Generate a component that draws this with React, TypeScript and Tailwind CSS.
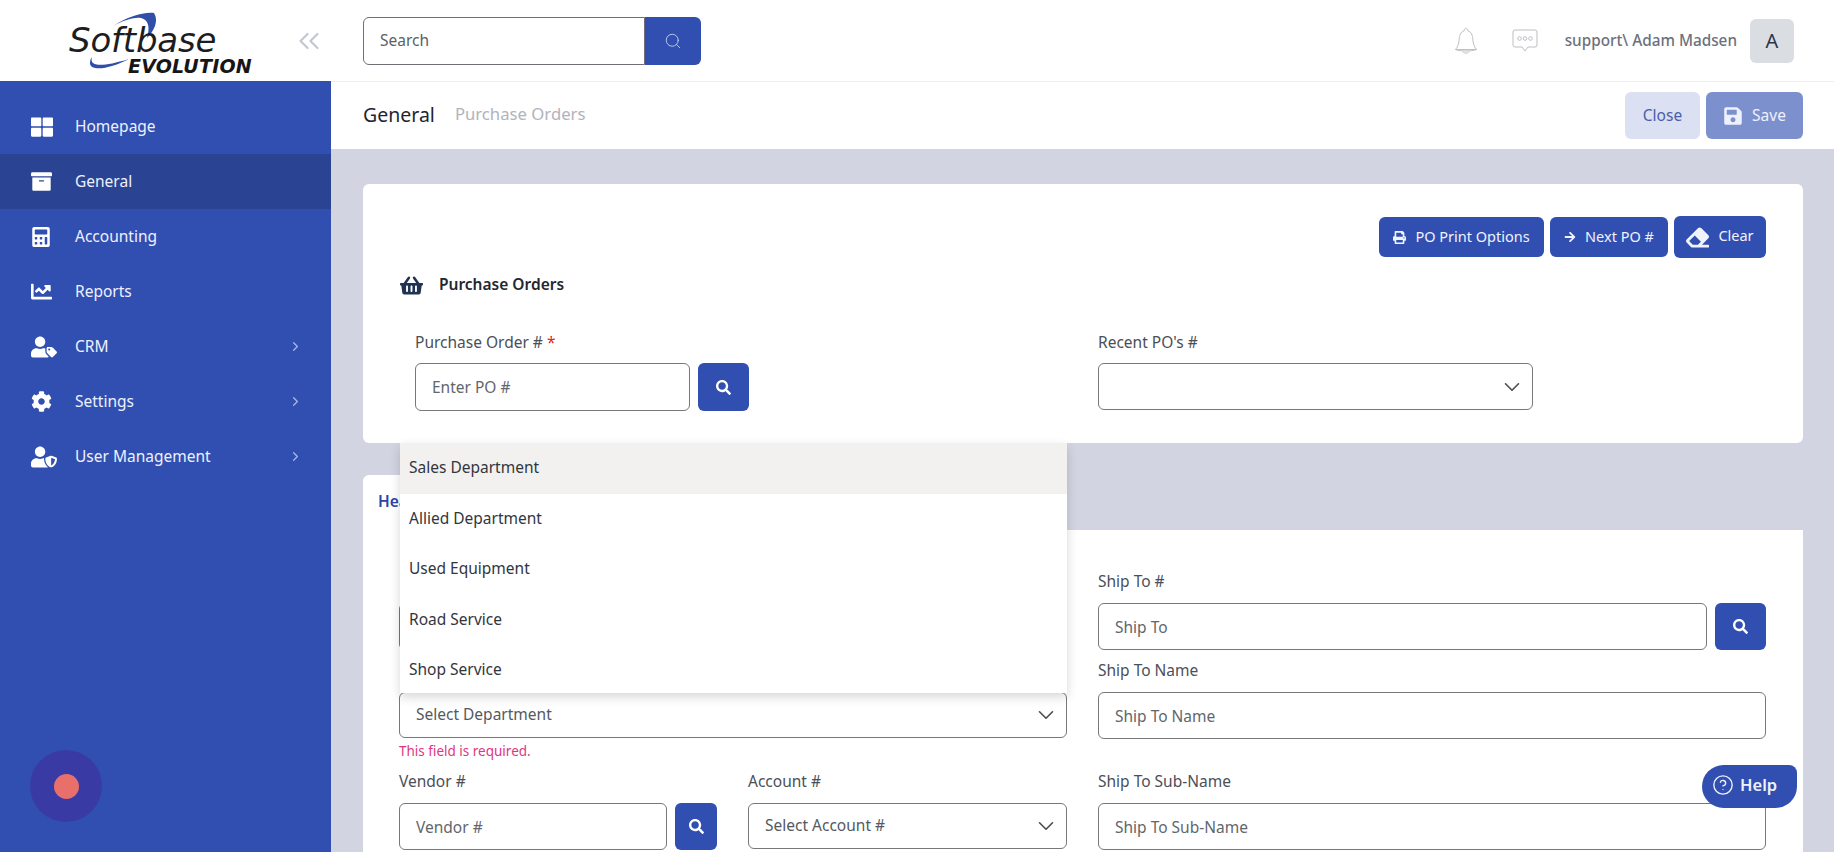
import { ChevronDown, ChevronRight, ChevronsLeft, CircleHelp, Search } from "lucide-react";
import {
  FaArchive,
  FaArrowRight,
  FaCalculator,
  FaChartLine,
  FaCog,
  FaEraser,
  FaPrint,
  FaSave,
  FaSearch,
  FaShoppingBasket,
  FaThLarge,
  FaUserShield,
  FaUserTag,
} from "react-icons/fa";

const navItems = [
  { label: "Homepage", icon: FaThLarge, size: 22 },
  { label: "General", icon: FaArchive, size: 21, active: true },
  { label: "Accounting", icon: FaCalculator, size: 20 },
  { label: "Reports", icon: FaChartLine, size: 21 },
  { label: "CRM", icon: FaUserTag, size: 26, more: true },
  { label: "Settings", icon: FaCog, size: 21, more: true },
  { label: "User Management", icon: FaUserShield, size: 26, more: true },
];

const departments = ["Sales Department", "Allied Department", "Used Equipment", "Road Service", "Shop Service"];

const Logo = () => (
  <div className="relative h-[81px] w-[262px] shrink-0 overflow-hidden">
    <svg className="absolute left-0 top-0" width="262" height="81" viewBox="0 0 262 81">
      <path d="M113 26 C128 17 142 12 154 13 C159 21 154 31 147 38 C150 28 149 20 141 18 C132 17 123 21 113 26 Z" fill="#2f4fa8" />
      <path d="M92 57 C89 66 100 68 129 59 C112 68 92 72 90 64 C90 62 90 59 92 57 Z" fill="#2f4fa8" />
    </svg>
    <span className="absolute left-[69px] top-[25px] font-['DejaVu_Sans',sans-serif] text-[34px] italic leading-[30px] tracking-[-0.2px] text-[#1d1d1f]">
      Softbase
    </span>
    <span className="absolute left-[128px] top-[59px] font-['DejaVu_Sans',sans-serif] text-[19px] font-bold italic leading-[14px] tracking-[0.2px] text-[#161616]">
      EVOLUTION
    </span>
  </div>
);

const Sidebar = () => (
  <aside className="flex w-[331px] shrink-0 flex-col bg-[#304fb1]">
    <div className="flex h-[81px] shrink-0 items-center bg-white">
      <Logo />
      <ChevronsLeft className="ml-[30px] text-[#c3c6ce]" size={34} strokeWidth={1.5} />
    </div>
    <nav className="pt-[18px]">
      {navItems.map((item) => (
        <div
          key={item.label}
          className={`flex h-[55px] items-center pl-[31px] pr-[28px] text-[15.500px] text-[#eef1fb] ${item.active ? "bg-[#2a4493]" : ""}`}
        >
          <span className="flex w-[44px] items-center">
            <item.icon size={item.size} className="text-white" />
          </span>
          <span className="flex-1">{item.label}</span>
          {item.more && <ChevronRight size={15} className="text-[#a9b8e8]" />}
        </div>
      ))}
    </nav>
  </aside>
);

const TopBar = () => (
  <div className="flex h-[82px] shrink-0 items-center border-b border-[#eceef2] bg-white pl-[32px] pr-[40px]">
    <div className="flex h-[48px] w-[338px]">
      <input
        placeholder="Search"
        className="min-w-0 flex-1 rounded-l-[6px] border border-[#6f6f75] pl-[16px] text-[15.500px] outline-none placeholder:text-[#5b5f66]"
      />
      <div className="flex w-[56px] items-center justify-center rounded-r-[6px] bg-[#304fb1]">
        <Search size={18} strokeWidth={1.2} className="text-[#c5d1f5]" />
      </div>
    </div>
    <div className="ml-auto flex items-center">
      <svg width="24" height="28" viewBox="0 0 24 28" fill="none" stroke="#bdbfc4" strokeWidth="1" className="mr-[34px]">
        <path d="M12 1.500a1.800 1.800 0 0 1 1.800 2.300C17.500 5 18.500 8.500 18.800 12c.3 4 1 7.500 3.700 10.500H1.500C4.200 19.500 5 16 5.200 12c.3-3.500 1.300-7 5-8.200A1.800 1.800 0 0 1 12 1.500Z" />
        <path d="M1.500 22.500c5 2 16 2 21 0M9 24.500c1 2.200 5 2.200 6 0" />
      </svg>
      <svg width="26" height="26" viewBox="0 0 26 26" fill="none" stroke="#bdbfc4" strokeWidth="1" className="mr-[27px]">
        <path d="M3 2h20a2 2 0 0 1 2 2v13a2 2 0 0 1-2 2h-7l-3 4-3-4H3a2 2 0 0 1-2-2V4a2 2 0 0 1 2-2Z" />
        <circle cx="7.500" cy="10.500" r="1.800" />
        <circle cx="13" cy="10.500" r="1.800" />
        <circle cx="18.500" cy="10.500" r="1.800" />
      </svg>
      <span className="mr-[13px] text-[15.300px] font-medium text-[#6c717c]">support\ Adam Madsen</span>
      <div className="flex h-[44px] w-[44px] items-center justify-center rounded-[6px] bg-[#dadde1] text-[20px] text-[#2e3547]">
        A
      </div>
    </div>
  </div>
);

const SubBar = () => (
  <div className="flex h-[67px] shrink-0 items-center bg-white pl-[32px] pr-[31px]">
    <span className="mt-[-2px] text-[19.500px] text-[#1f2430]">General</span>
    <span className="ml-[20px] mt-[-3px] text-[16.700px] text-[#b1b3bb]">Purchase Orders</span>
    <div className="ml-auto flex gap-[6px]">
      <button className="h-[47px] w-[75px] rounded-[6px] bg-[#dbe0f3] text-[15.500px] text-[#4a5ea8]">Close</button>
      <button className="flex h-[47px] w-[97px] items-center justify-center gap-[9px] rounded-[6px] bg-[#7d90ce] text-[15.500px] text-[#eef1fb]">
        <FaSave size={20} />
        Save
      </button>
    </div>
  </div>
);

const Label = ({ children }: { children: React.ReactNode }) => (
  <label className="mb-[11px] block h-[22px] text-[15.500px] leading-[22px] text-[#4b4f58]">{children}</label>
);

const Input = ({ placeholder, className = "" }: { placeholder?: string; className?: string }) => (
  <input
    placeholder={placeholder}
    className={`h-[47px] min-w-0 flex-1 rounded-[6px] border border-[#77777c] bg-white pl-[16px] text-[15.500px] outline-none placeholder:text-[#62666d] ${className}`}
  />
);

const SearchButton = ({ width }: { width: string }) => (
  <button className={`flex h-[47px] ${width} shrink-0 items-center justify-center rounded-[6px] bg-[#304fb1] text-white`}>
    <FaSearch size={15} />
  </button>
);

const Select = ({ placeholder, height = "h-[46px]" }: { placeholder?: string; height?: string }) => (
  <div className={`flex ${height} items-center justify-between rounded-[6px] border border-[#77777c] bg-white pl-[16px] pr-[7px] text-[15.500px] text-[#55595f]`}>
    <span>{placeholder}</span>
    <ChevronDown size={26} strokeWidth={1.5} className="text-[#4c4c50]" />
  </div>
);

const DepartmentMenu = () => (
  <div className="absolute left-[37px] top-[-32px] z-10 h-[250px] w-[667px] overflow-hidden bg-white shadow-[0_4px_10px_rgba(0,0,0,0.16)]">
    {departments.map((d, i) => (
      <div
        key={d}
        className={`flex h-[50.500px] items-center pb-[1px] pl-[9px] text-[15.500px] text-[#32363d] ${i === 0 ? "bg-[#f2f1f0]" : ""}`}
      >
        {d}
      </div>
    ))}
  </div>
);

const App = () => {
  return (
    <div className="relative flex h-[852px] w-full overflow-hidden font-['Noto_Sans',sans-serif]">
      <Sidebar />
      <main className="flex min-w-0 flex-1 flex-col bg-[#d3d4e2]">
        <TopBar />
        <SubBar />

        <div className="flex-1 pl-[32px] pr-[31px] pt-[35px]">
          <section className="h-[259px] rounded-[6px] bg-white px-[37px] pt-[32px]">
            <div className="flex h-[42px] items-center justify-end gap-[6px]">
              <button className="flex h-[40px] w-[165px] items-center justify-center gap-[9px] rounded-[6px] bg-[#304fb1] text-[14.500px] text-[#f0f3fc]">
                <FaPrint size={13} />
                PO Print Options
              </button>
              <button className="flex h-[40px] w-[118px] items-center justify-center gap-[9px] rounded-[6px] bg-[#304fb1] text-[14.500px] text-[#f0f3fc]">
                <FaArrowRight size={12} />
                Next PO #
              </button>
              <button className="flex h-[42px] w-[92px] items-center justify-center gap-[9px] rounded-[6px] bg-[#304fb1] pb-[3px] text-[14.500px] text-[#f0f3fc]">
                <FaEraser size={23} className="mt-[3px]" />
                Clear
              </button>
            </div>
            <div className="mt-[15px] flex h-[24px] items-center">
              <FaShoppingBasket size={23} className="text-[#1f3352]" />
              <span className="ml-[16px] text-[15.500px] font-semibold text-[#24272e]">Purchase Orders</span>
            </div>
            <div className="mt-[34px] grid grid-cols-[651px_435px] gap-x-[32px] pl-[15px]">
              <div>
                <Label>
                  Purchase Order # <span className="text-[#dc2626]">*</span>
                </Label>
                <div className="mt-[-1px] flex w-[334px] gap-[8px]">
                  <Input placeholder="Enter PO #" className="h-[48px]" />
                  <SearchButton width="w-[51px] !h-[48px]" />
                </div>
              </div>
              <div>
                <Label>Recent PO's #</Label>
                <div className="mt-[-1px]">
                  <Select height="h-[47px]" />
                </div>
              </div>
            </div>
          </section>

          <div className="relative mt-[32px]">
            <DepartmentMenu />
            <div className="flex h-[55px] w-[200px] items-center rounded-t-[6px] bg-white pb-[2px] pl-[15px] text-[15.500px] font-semibold text-[#2a45a5]">
              Header
            </div>
            <section className="grid h-[400px] grid-cols-[668px_668px] content-start gap-x-[31px] bg-white pl-[36px] pr-[37px] pt-[40px]">
              <div>
                <div className="mb-[11px] h-[22px]" />
                <div className="flex">
                  <Input />
                </div>
                <div className="mb-[11px] mt-[9px] h-[22px]" />
                <Select placeholder="Select Department" />
                <p className="mt-[3px] h-[20px] text-[13.500px] leading-[20px] text-[#e0357f]">This field is required.</p>
                <div className="mt-[9px] grid grid-cols-[318px_319px] gap-x-[31px]">
                  <div>
                    <Label>Vendor #</Label>
                    <div className="flex gap-[8px]">
                      <Input placeholder="Vendor #" />
                      <SearchButton width="w-[42px]" />
                    </div>
                  </div>
                  <div>
                    <Label>Account #</Label>
                    <Select placeholder="Select Account #" />
                  </div>
                </div>
              </div>
              <div>
                <Label>Ship To #</Label>
                <div className="flex gap-[8px]">
                  <Input placeholder="Ship To" />
                  <SearchButton width="w-[51px]" />
                </div>
                <div className="mt-[9px]">
                  <Label>Ship To Name</Label>
                  <div className="flex">
                    <Input placeholder="Ship To Name" />
                  </div>
                </div>
                <div className="mt-[31px]">
                  <Label>Ship To Sub-Name</Label>
                  <div className="flex">
                    <Input placeholder="Ship To Sub-Name" />
                  </div>
                </div>
              </div>
            </section>
          </div>
        </div>
      </main>

      <div className="absolute left-[30px] top-[750px] flex h-[72px] w-[72px] items-center justify-center rounded-full bg-[#3a3aa5]">
        <div className="h-[25px] w-[25px] rounded-full bg-[#e96f6b]" />
      </div>
      <div className="absolute left-[1702px] top-[765px] flex h-[43px] w-[95px] items-center gap-[6px] rounded-[22px] rounded-tr-[8px] bg-[#304fb1] pb-[3px] pl-[10px] text-[16.500px] font-semibold text-[#eef1fb]">
        <CircleHelp size={22} strokeWidth={1.5} />
        Help
      </div>
    </div>
  );
};

export default App;
